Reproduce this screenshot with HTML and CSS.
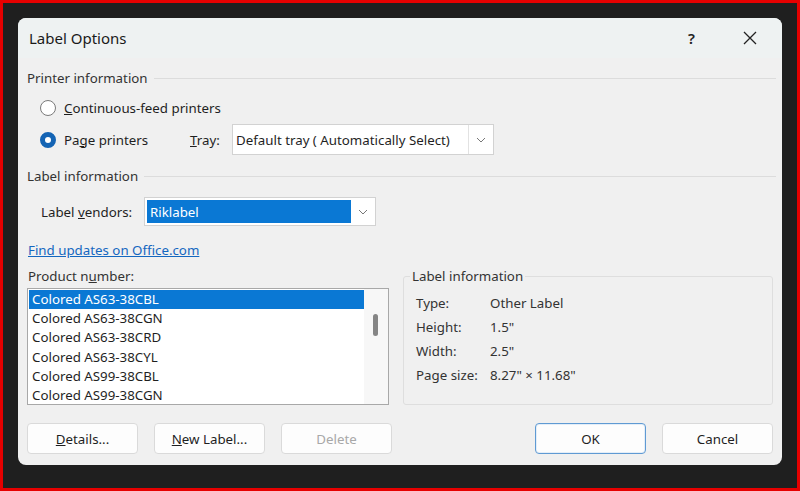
FILE: index.html
```html
<!DOCTYPE html>
<html>
<head>
  <link rel="stylesheet" href="styles.css">
</head>
<body>
  <div class="frame">
    <div class="dialog">
      <div class="titlebar">
        <span class="title">Label Options</span>
        <span class="help">?</span>
        <svg class="close" width="16" height="16" viewBox="0 0 16 16">
          <path d="M2 2 L14 14 M14 2 L2 14" stroke="#222" stroke-width="1.3" fill="none"/>
        </svg>
      </div>

      <div class="content">
        <div class="section-head"><span>Printer information</span><div class="rule"></div></div>

        <div class="radio-row first">
          <span class="radio"></span>
          <span><u>C</u>ontinuous-feed printers</span>
        </div>

        <div class="radio-row second">
          <span class="radio checked"></span>
          <span class="page-label">Pa<u>g</u>e printers</span>
          <span class="tray-label"><u>T</u>ray:</span>
          <div class="select tray">
            <span class="select-text">Default tray ( Automatically Select)</span>
            <span class="select-arrow">
              <svg width="10" height="6" viewBox="0 0 10 6"><path d="M1 1 L5 5 L9 1" stroke="#777" stroke-width="1" fill="none"/></svg>
            </span>
          </div>
        </div>

        <div class="section-head second-head"><span>Label information</span><div class="rule"></div></div>

        <div class="vendor-row">
          <span class="vendor-label">Label <u>v</u>endors:</span>
          <div class="select vendor">
            <span class="select-text highlight">Riklabel</span>
            <span class="select-arrow">
              <svg width="10" height="6" viewBox="0 0 10 6"><path d="M1 1 L5 5 L9 1" stroke="#777" stroke-width="1" fill="none"/></svg>
            </span>
          </div>
        </div>

        <a class="link" href="#">Find updates on Office.com</a>

        <div class="lower">
          <div class="product">
            <div class="product-label">Product n<u>u</u>mber:</div>
            <div class="listbox">
              <div class="items">
                <div class="item selected">Colored AS63-38CBL</div>
                <div class="item">Colored AS63-38CGN</div>
                <div class="item">Colored AS63-38CRD</div>
                <div class="item">Colored AS63-38CYL</div>
                <div class="item">Colored AS99-38CBL</div>
                <div class="item">Colored AS99-38CGN</div>
              </div>
              <div class="scrollbar"><div class="thumb"></div></div>
            </div>
          </div>

          <div class="info-box">
            <span class="legend">Label information</span>
            <div class="info-grid">
              <span>Type:</span><span>Other Label</span>
              <span>Height:</span><span>1.5"</span>
              <span>Width:</span><span>2.5"</span>
              <span>Page size:</span><span>8.27" × 11.68"</span>
            </div>
          </div>
        </div>

        <div class="buttons">
          <button><u>D</u>etails...</button>
          <button><u>N</u>ew Label...</button>
          <button disabled>Delete</button>
          <div class="spacer"></div>
          <button class="default">OK</button>
          <button>Cancel</button>
        </div>
      </div>
    </div>
  </div>
</body>
</html>
```

FILE: styles.css
```css
body {
  margin: 0;
  font-family: "Noto Sans", "Open Sans", sans-serif;
  font-size: 13.3px;
  color: #1f1f1f;
}

.frame {
  width: 800px;
  height: 491px;
  box-sizing: border-box;
  border: 3px solid #e60000;
  background: #1f1f1f;
  padding: 15px;
}

.dialog {
  width: 764px;
  height: 447px;
  background: #f0f0f0;
  border-radius: 8px;
  overflow: hidden;
}

.titlebar {
  height: 40px;
  display: flex;
  align-items: center;
  background: #eef2f2;
  padding-left: 11px;
  padding-right: 24px;
}

.title {
  font-size: 15px;
  flex: 1;
  color: #1a1a1a;
}

.help {
  font-size: 15px;
  font-weight: 600;
  margin-right: 47px;
  color: #222;
}

.content {
  padding: 12px 6px 0 9px;
}

.section-head {
  display: flex;
  align-items: center;
  height: 16px;
  gap: 6px;
  color: #333;
}

.rule {
  flex: 1;
  height: 1px;
  background: #dcdcdc;
}

.radio-row {
  display: flex;
  align-items: center;
  margin-left: 13px;
}

.radio-row.first {
  margin-top: 12px;
  height: 20px;
}

.radio-row.second {
  margin-top: 6px;
  height: 31px;
}

.radio {
  width: 16px;
  height: 16px;
  border-radius: 50%;
  border: 1px solid #7a7a7a;
  background: #fff;
  box-sizing: border-box;
  margin-right: 8px;
}

.radio.checked {
  border: 5px solid #1464b4;
  background: #fff;
}

.page-label {
  width: 126px;
}

.tray-label {
  width: 42px;
}

.select {
  display: flex;
  align-items: center;
  background: #fff;
  border: 1px solid #d2d2d2;
  box-sizing: border-box;
}

.select.tray {
  width: 262px;
  height: 31px;
}

.select-text {
  flex: 1;
  padding-left: 3px;
  white-space: nowrap;
}

.select-arrow {
  width: 24px;
  align-self: stretch;
  display: flex;
  align-items: center;
  justify-content: center;
  border-left: 1px solid #e2e2e2;
}

.second-head {
  margin-top: 13px;
}

.vendor-row {
  display: flex;
  align-items: center;
  margin-top: 13px;
  margin-left: 14px;
  height: 29px;
}

.vendor-label {
  width: 103px;
}

.select.vendor {
  width: 232px;
  height: 29px;
  padding: 2px 0 2px 2px;
}

.select-text.highlight {
  align-self: stretch;
  display: flex;
  align-items: center;
  background: #0a78d4;
  color: #fff;
  padding-left: 3px;
}

.select.vendor .select-arrow {
  border-left: none;
}

.link {
  display: block;
  margin-top: 15px;
  margin-left: 1px;
  height: 18px;
  color: #1467c0;
}

.lower {
  display: flex;
  margin-top: 8px;
  gap: 14px;
}

.product {
  width: 362px;
}

.product-label {
  margin-left: 1px;
  height: 21px;
  color: #333;
}

.listbox {
  display: flex;
  height: 117px;
  border: 1px solid #a8a8a8;
  background: #fff;
  box-sizing: border-box;
}

.items {
  flex: 1;
  padding: 1px 0 0 1px;
  overflow: hidden;
}

.item {
  height: 19.2px;
  line-height: 19px;
  padding-left: 3px;
  white-space: nowrap;
}

.item.selected {
  background: #0a78d4;
  color: #fff;
}

.scrollbar {
  width: 24px;
  background: #f7f7f7;
  position: relative;
}

.thumb {
  position: absolute;
  left: 9px;
  top: 25px;
  width: 5px;
  height: 22px;
  border-radius: 3px;
  background: #858585;
}

.info-box {
  position: relative;
  width: 370px;
  height: 129px;
  margin-top: 9px;
  border: 1px solid #dedede;
  border-radius: 3px;
  box-sizing: border-box;
}

.legend {
  position: absolute;
  top: -10px;
  left: 6px;
  padding: 0 2px;
  background: #f0f0f0;
  color: #333;
}

.info-grid {
  display: grid;
  grid-template-columns: 74px auto;
  row-gap: 6px;
  margin: 17px 0 0 12px;
  line-height: 18px;
  color: #333;
}

.buttons {
  display: flex;
  gap: 16px;
  margin-top: 18px;
  margin-left: 0;
  margin-right: 3px;
}

.spacer {
  flex: 1;
}

button {
  width: 111px;
  height: 31px;
  background: #fdfdfd;
  border: 1px solid #dadada;
  border-radius: 4px;
  font-family: inherit;
  font-size: 13.3px;
  color: #1f1f1f;
}

button:disabled {
  color: #a8a8a8;
}

button.default {
  border: 1px solid #5f9ad3;
  box-shadow: inset 0 0 0 1px #e4eef8;
}
```
